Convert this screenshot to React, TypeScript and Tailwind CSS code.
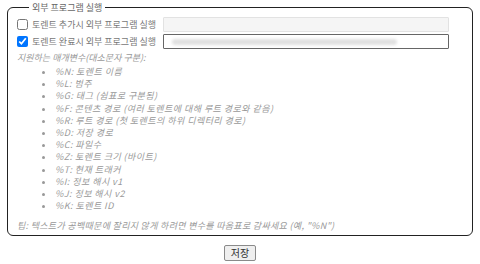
import React, { useState } from 'react'

const params = [
  '%N: 토렌트 이름',
  '%L: 범주',
  '%G: 태그 (쉼표로 구분됨)',
  '%F: 콘텐츠 경로 (여러 토렌트에 대해 루트 경로와 같음)',
  '%R: 루트 경로 (첫 토렌트의 하위 디렉터리 경로)',
  '%D: 저장 경로',
  '%C: 파일수',
  '%Z: 토렌트 크기 (바이트)',
  '%T: 현재 트래커',
  '%I: 정보 해시 v1',
  '%J: 정보 해시 v2',
  '%K: 토렌트 ID',
]

const font = "font-['Noto_Sans_CJK_KR','Liberation_Sans',sans-serif]"

export default function App() {
  const [onAdded, setOnAdded] = useState(false)
  const [onFinished, setOnFinished] = useState(true)

  return (
    <div className={`w-[480px] h-[264px] bg-white ${font} text-[9px] text-[#555]`}>
      {/* 외부 프로그램 실행 */}
      <fieldset className="ml-[7px] mt-[1px] w-[466px] border border-[#222] rounded-[6px] pl-[9px] pr-[9px] pb-[3px]">
        <legend className="ml-[12px] px-[3px] leading-[13px] text-[#666]">외부 프로그램 실행</legend>

        <div className="flex items-center h-[15px] mt-[3px]">
          <input
            type="checkbox"
            checked={onAdded}
            onChange={(e) => setOnAdded(e.target.checked)}
            className="w-[11px] h-[11px] m-0"
          />
          <label className="ml-[4px] w-[131px] text-[#777] leading-none">토렌트 추가시 외부 프로그램 실행</label>
          <input
            type="text"
            disabled={!onAdded}
            className="w-[286px] h-[15px] border border-[#e2e2e2] bg-[#f5f5f5] rounded-[1px]"
          />
        </div>

        <div className="flex items-center h-[15px] mt-[2px]">
          <input
            type="checkbox"
            checked={onFinished}
            onChange={(e) => setOnFinished(e.target.checked)}
            className="w-[11px] h-[11px] m-0"
          />
          <label className="ml-[4px] w-[131px] text-[#777] leading-none">토렌트 완료시 외부 프로그램 실행</label>
          <div className="relative w-[286px] h-[15px] border border-[#666] bg-white rounded-[1px]">
            <span className="absolute left-[8px] top-[4px] w-[225px] h-[6px] bg-[#e0e0e0] blur-[1.5px] rounded-full"></span>
          </div>
        </div>

        <div className="mt-[2px] italic text-[#999] leading-[13px]">지원하는 매개변수(대소문자 구분):</div>
        <ul className="list-disc pl-[38px] mt-[2px] italic text-[#999] tracking-[0.45px] leading-[12.2px]">
          {params.map((p) => (
            <li key={p}>{p}</li>
          ))}
        </ul>
        <div className="mt-[7px] italic text-[#999] tracking-[0.3px] leading-[13px]">
          팁: 텍스트가 공백때문에 잘리지 않게 하려면 변수를 따옴표로 감싸세요 (예, "%N")
        </div>
      </fieldset>

      <div className="flex justify-center mt-[9px]">
        <button className="h-[16px] px-[6px] border border-[#8a8a8a] bg-[#efefef] rounded-[2px] text-[10px] text-[#333] leading-none">
          저장
        </button>
      </div>
    </div>
  )
}
